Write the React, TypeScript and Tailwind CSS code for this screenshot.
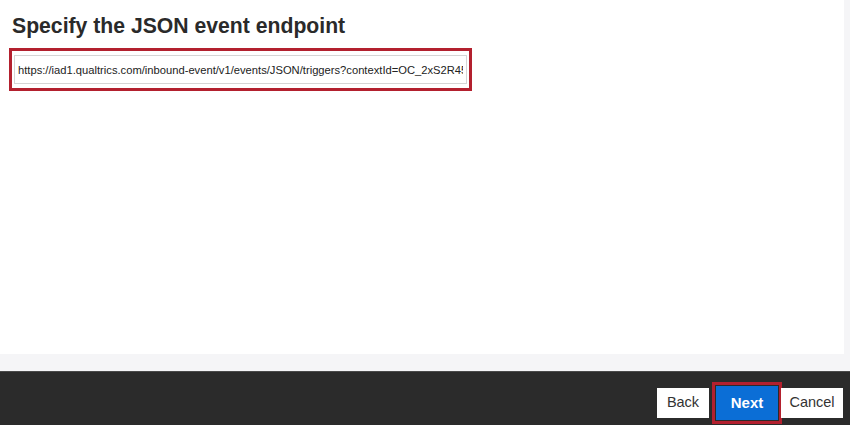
export default function App() {
  return (
    <div
      className="flex h-[425px] w-[850px] flex-col overflow-hidden bg-[#f5f5f7]"
      style={{ fontFamily: '"Liberation Sans", Arial, sans-serif' }}
    >
      <div className="h-[371px] shrink-0 pr-[6px] pb-[17px]">
        <div className="h-full bg-white px-[9px] pt-[13px]">
          <h1 className="pl-[3px] text-[21.2px] leading-[26px] font-bold text-[#2a2a2a]">
            Specify the JSON event endpoint
          </h1>
          <div className="mt-[9px] w-[463px] border-[3px] border-[#b3202e] px-[2px] py-[4px]">
            <input
              readOnly
              value="https://iad1.qualtrics.com/inbound-event/v1/events/JSON/triggers?contextId=OC_2xS2R45"
              className="block h-[29px] w-full border border-[#d5d5d5] bg-white px-[3px] text-[11.2px] text-[#222] outline-none"
            />
          </div>
        </div>
      </div>
      <div className="flex flex-1 items-center justify-end border-t border-[#4a4a4a] bg-[#2b2b2b] pt-[9px] pr-[7px]">
        <button className="h-[30px] w-[52px] bg-white text-[14.5px] text-[#333]">Back</button>
        <div className="ml-[3px] border-[3px] border-[#b3202e] p-[1px]">
          <button className="block h-[34px] w-[62px] bg-[#0b6ed6] text-[15px] font-bold text-white">
            Next
          </button>
        </div>
        <button className="-ml-px h-[30px] w-[62px] bg-white text-[14.5px] text-[#333]">Cancel</button>
      </div>
    </div>
  );
}
